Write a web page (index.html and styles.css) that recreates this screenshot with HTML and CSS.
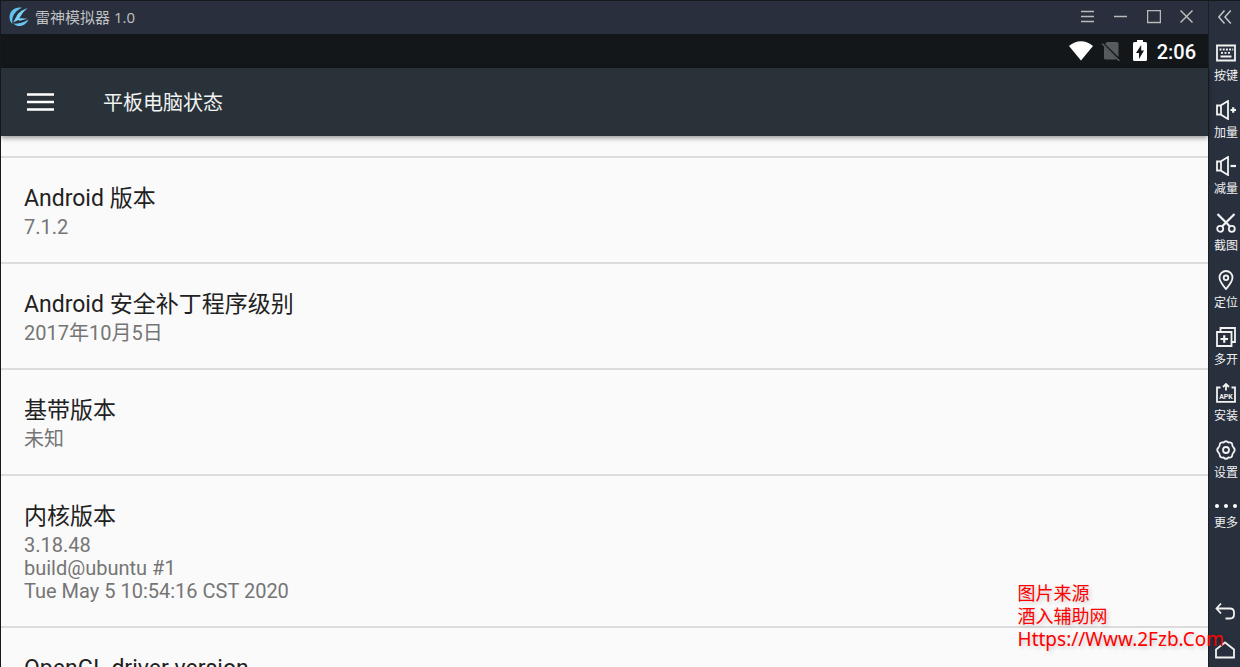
FILE: index.html
```html
<!DOCTYPE html>
<html lang="zh-CN">
<head>
<meta charset="utf-8">
<title>雷神模拟器 1.0</title>
<link rel="stylesheet" href="styles.css">
</head>
<body>
<div class="window">
  <div class="main">
    <header class="titlebar">
      <svg class="logo" viewBox="0 0 20 20"><path d="M13 .8C7-.8 1 3 .6 9.500c-.2 3.500 1 6 2.900 7.500C2.800 13 3.500 9 6 6 8 3.600 10 2 13 .8z" fill="#62c3ef"/><path d="M18.500 1C12 3.500 9 6 7.500 9.500L4 15.500l5.500-2.500 1.200.8 7.800-2-6.500-.6-1.800.3L14 5.500z" fill="#7ad3f7"/><path d="M4.500 16.500c5 .6 10.500-.9 15-3.900-2.500 6-10 9-15 3.900z" fill="#68c7f2"/></svg>
      <h1 class="app-name">雷神模拟器 1.0</h1>
      <div class="controls">
        <button class="ctl" aria-label="菜单"><svg viewBox="0 0 14 14"><path d="M0 1.500h13M0 6.500h13M0 11.500h13"/></svg></button>
        <button class="ctl" aria-label="最小化"><svg viewBox="0 0 14 14"><path d="M0 6.500h13"/></svg></button>
        <button class="ctl" aria-label="最大化"><svg viewBox="0 0 14 14"><path d="M.5.5h13v12H.5z"/></svg></button>
        <button class="ctl" aria-label="关闭"><svg viewBox="0 0 14 14"><path d="M.5.5l12 12M12.500.5l-12 12"/></svg></button>
      </div>
    </header>
    <div class="status">
      <svg class="wifi" viewBox="0 0 24 20"><path d="M0 5C7-1.300 17-1.300 24 5L12 19.500z" fill="#fff"/></svg>
      <svg class="sim" viewBox="0 0 20 20"><path d="M6 1h10q1.500 0 1.500 1.500V16L4 3z" fill="#585b5e"/><path d="M3 5.500L16 18.500H4.500Q3 18.500 3 17z" fill="#585b5e"/><path d="M1 2.500L18.500 20" stroke="#585b5e" stroke-width="1.500"/></svg>
      <svg class="battery" viewBox="0 0 14 22"><path d="M4 0h6v2h2.500Q14 2 14 3.500v16q0 1.500-1.500 1.500h-11Q0 21 0 19.500v-16Q0 2 1.500 2H4z" fill="#fff"/><path d="M8.200 5L3 13h3v6l5-8.500H8.200z" fill="#13171a"/></svg>
      <time class="clock">2:06</time>
    </div>
    <div class="toolbar">
      <button class="menu" aria-label="导航"><svg viewBox="0 0 27 18"><path d="M0 1.500h27M0 9h27M0 16.500h27" stroke="#fff" stroke-width="2.700"/></svg></button>
      <h2 class="heading">平板电脑状态</h2>
    </div>
    <main class="list">
      <section class="row"><h3 class="name">Android 版本</h3><p class="value">7.1.2</p></section>
      <section class="row"><h3 class="name">Android 安全补丁程序级别</h3><p class="value">2017年10月5日</p></section>
      <section class="row"><h3 class="name">基带版本</h3><p class="value">未知</p></section>
      <section class="row"><h3 class="name">内核版本</h3><p class="value">3.18.48<br>build@ubuntu #1<br>Tue May 5 10:54:16 CST 2020</p></section>
      <section class="row"><h3 class="name">OpenGL driver version</h3></section>
    </main>
  </div>
  <nav class="side">
    <button class="collapse" aria-label="收起"><svg viewBox="0 0 14 14"><path d="M6.500.5L.8 7l5.700 6.500M12.800.5L7 7l5.800 6.500"/></svg></button>
    <div class="tools">
      <button class="tool"><svg viewBox="0 0 20 20"><path d="M1 2.500h18v15H1z"/><path d="M3.500 6.500h2m1.200 0h2m1.200 0h2m1.200 0h2m1.200 0h1M5 9.800h2m1.500 0h2m1.500 0h2M4.500 13.500h11"/></svg><span>按键</span></button>
      <button class="tool"><svg viewBox="0 0 20 20"><path d="M1 5.500h3.500L12 1v18l-7.500-4.500H1zM5 5.500v9"/><path class="bold" d="M14.500 10h5.500M17.200 7.300v5.400"/></svg><span>加量</span></button>
      <button class="tool"><svg viewBox="0 0 20 20"><path d="M1 5.500h3.500L12 1v18l-7.500-4.500H1zM5 5.500v9"/><path class="bold" d="M14.500 10h5.500"/></svg><span>减量</span></button>
      <button class="tool"><svg viewBox="0 0 20 20"><path class="bold" d="M1.500 1l12.500 12.500M18.500 1L6 13.500"/><circle cx="4.200" cy="15.800" r="3"/><circle cx="15.800" cy="15.800" r="3"/></svg><span>截图</span></button>
      <button class="tool"><svg viewBox="0 0 20 20"><path d="M10 19C7 15.500 3.500 11.500 3.500 7.500a6.500 6.500 0 0 1 13 0c0 4-3.500 8-6.500 11.500z"/><circle cx="10" cy="7.800" r="2.300"/></svg><span>定位</span></button>
      <button class="tool"><svg viewBox="0 0 20 20"><path d="M1 5h14.500v14H1zM4.500 5V1H19v14h-3.500"/><path class="bold" d="M4.500 12h7.500M8.250 8.250v7.500"/></svg><span>多开</span></button>
      <button class="tool"><svg viewBox="0 0 20 20"><path d="M4.500 4.500H1v14.300h18V4.500h-3.500M10 7.500V1M7 4l3-3 3 3"/><text class="apk" x="10" y="16" text-anchor="middle">APK</text></svg><span>安装</span></button>
      <button class="tool"><svg viewBox="0 0 20 20"><path d="M7.500 2.500Q10 0 12.500 2.500 16 2.200 16.200 4.500q.2 1.800 1.300 3Q20 10 17.500 12.500q-1.100 1.200-1.300 3-.2 2.300-3.700 2Q10 20 7.500 17.500q-3.500.3-3.700-2-.2-1.800-1.300-3Q0 10 2.500 7.500q1.100-1.200 1.300-3Q4 2.200 7.500 2.500z" stroke-linejoin="round"/><circle cx="10" cy="10" r="3"/></svg><span>设置</span></button>
    </div>
    <button class="tool more"><svg viewBox="0 0 24 6"><g fill="#fff" stroke="none"><circle cx="3" cy="3" r="2"/><circle cx="12" cy="3" r="2"/><circle cx="21" cy="3" r="2"/></g></svg><span>更多</span></button>
    <div class="system">
      <button class="sys" aria-label="返回"><svg viewBox="0 0 20 20"><path d="M6 1.500L1.500 6.500 6 11.500M1.500 6.500H15q4 0 4 4v2q0 4-4 4h-4.500"/></svg></button>
      <button class="sys" aria-label="主页"><svg viewBox="0 0 20 20"><path d="M1 9.500L10 2.500l9 7v8H1z"/></svg></button>
    </div>
  </nav>
  <aside class="credit">图片来源<br>酒入辅助网<br><span class="url">Https://Www.2Fzb.Com</span></aside>
</div>
</body>
</html>
```
FILE: styles.css
```css
* { box-sizing: border-box; }
body {
  margin: 0;
  font-family: Roboto, "Noto Sans CJK SC", sans-serif;
  background: #fafafa;
}
h1, h2, h3, p { margin: 0; font-weight: 400; }
button {
  margin: 0;
  padding: 0;
  border: 0;
  background: none;
  color: inherit;
  font: inherit;
}
svg { display: block; fill: none; }

.window {
  position: relative;
  display: flex;
  height: 100vh;
  overflow: hidden;
  border-top: 1px solid #15181d;
  border-left: 1px solid #15181d;
}
.main {
  flex: 1;
  min-width: 0;
  display: flex;
  flex-direction: column;
}

.titlebar {
  flex: none;
  display: flex;
  align-items: center;
  height: 33px;
  padding: 0 14px 2px 8px;
  background: #292f3d;
}
.logo { width: 20px; height: 20px; }
.app-name {
  margin-left: 6px;
  font: 15px/18px "Open Sans", "Noto Sans CJK SC", sans-serif;
  color: #c0c1c3;
}
.controls { display: flex; gap: 19px; margin-left: auto; }
.ctl svg { width: 14px; height: 14px; stroke: #b9bab9; stroke-width: 1.500; }

.status {
  flex: none;
  display: flex;
  align-items: center;
  height: 34px;
  padding: 0 12px;
  justify-content: flex-end;
  background: #13171a;
}
.wifi { width: 24px; height: 20px; }
.sim { width: 20px; height: 20px; margin-left: 8px; }
.battery { width: 14px; height: 22px; margin-left: 12px; }
.clock { margin-left: 10px; padding-top: 2px; font-size: 20px; font-weight: 500; line-height: 34px; color: #fff; }

.toolbar {
  position: relative;
  flex: none;
  display: flex;
  align-items: center;
  height: 68px;
  padding-left: 26px;
  background: #283238;
  box-shadow: 0 2px 5px rgba(0, 0, 0, .4);
}
.menu svg { width: 27px; height: 18px; }
.heading { margin-left: 49px; padding-top: 2px; font-size: 20px; line-height: 28px; color: #f2f3f3; }

.list { flex: 1; min-height: 0; padding-top: 20px; overflow: hidden; background: #fafafa; }
.row { padding: 26px 23px 23px; border-top: 2px solid #dcdcdc; }
.name { font-size: 23px; line-height: 29px; color: #212121; }
.value { font-size: 20px; line-height: 23px; padding-top: 3px; color: #757575; }

.side {
  flex: none;
  display: flex;
  flex-direction: column;
  align-items: center;
  width: 32px;
  padding-left: 3px;
  background: #282f3d;
  border-left: 1px solid #1b1e25;
  color: #f2f2f2;
}
.side svg { stroke: #f2f2f2; stroke-width: 1.800; }
.collapse { padding: 9px 2px 19px 0; }
.side .collapse svg { width: 14px; height: 14px; stroke: #c4c6c8; stroke-width: 1.500; }
.tools {
  display: flex;
  flex-direction: column;
  justify-content: space-between;
  height: 437px;
}
.tool {
  flex: none;
  display: flex;
  flex-direction: column;
  align-items: center;
  gap: 4px;
  font: 12px/16px "Noto Sans CJK SC", sans-serif;
}
.tool svg { width: 20px; height: 20px; }
.side .bold { stroke-width: 2.200; }
.apk { font: 700 7px Roboto, sans-serif; fill: #f2f2f2; stroke: none; }
.more { margin-top: 23px; gap: 5px; }
.more svg { width: 24px; height: 6px; }
.system { margin-top: auto; padding: 0 2px 7px 0; display: grid; gap: 18px; }
.sys svg { width: 20px; height: 20px; }

.credit {
  position: absolute;
  right: 16px;
  bottom: 16px;
  font: 18px/23px "Noto Sans", "Noto Sans CJK SC", sans-serif;
  color: #f00;
  text-shadow: 2px 2px 4px rgba(0, 0, 0, .2);
}
.url { font-size: 19px; }
```
